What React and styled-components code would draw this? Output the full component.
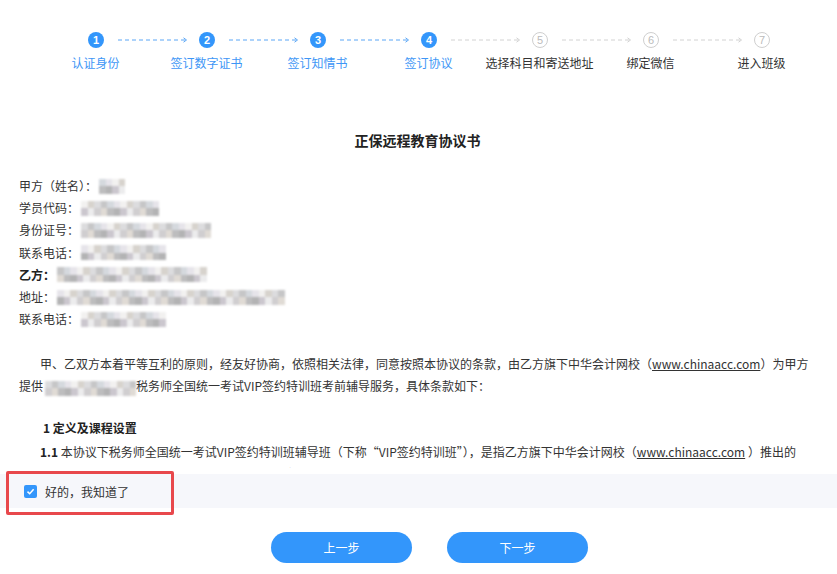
import React from "react";
import styled, { createGlobalStyle } from "styled-components";

const GlobalStyle = createGlobalStyle`
  html, body { margin: 0; padding: 0; background: #fff; }
  body {
    font-family: "Microsoft YaHei", "Noto Sans CJK SC", "Liberation Sans", sans-serif;
    color: #333;
  }
`;

const BLUE = "#3396fb";

const steps = [
  { label: "认证身份", done: true },
  { label: "签订数字证书", done: true },
  { label: "签订知情书", done: true },
  { label: "签订协议", done: true },
  { label: "选择科目和寄送地址", done: false },
  { label: "绑定微信", done: false },
  { label: "进入班级", done: false },
];

const greys = ["#ececed", "#dcdcde", "#d0ced0", "#c6c6c7", "#e0dbd5", "#d5d9de", "#bdbdbe", "#e6e4ea", "#b3b3b4", "#f2f1f0", "#cbc7ce", "#d7d3cd"];

function cells(seed, count) {
  const out = [];
  let s = seed * 9301 + 49297;
  for (let i = 0; i < count; i++) {
    s = (s * 9301 + 49297) % 233280;
    out.push(greys[s % greys.length]);
  }
  return out;
}

function Mosaic({ width, seed = 1 }) {
  const cols = Math.max(2, Math.round(width / 6.5));
  const list = cells(seed, cols * 2);
  return (
    <MosaicBox $cols={cols}>
      {list.map((c, i) => (
        <Cell key={i} $c={c} />
      ))}
    </MosaicBox>
  );
}

function Connector({ done }) {
  const c = done ? "#5aa6f6" : "#d2d2d2";
  return (
    <Line width="70" height="8" viewBox="0 0 70 8">
      <line x1="0" y1="4" x2="68" y2="4" stroke={c} strokeWidth="1" strokeDasharray="4 3" />
      <polyline points="65.5,1.8 68.5,4 65.5,6.2" fill="none" stroke={c} strokeWidth="1" />
    </Line>
  );
}

export default function App() {
  return (
    <Page>
      <GlobalStyle />
      <Steps>
        <CircleRow>
          {steps.map((s, i) => (
            <React.Fragment key={s.label}>
              <Circle $done={s.done}>{i + 1}</Circle>
              {i < steps.length - 1 && <Connector done={steps[i + 1].done} />}
            </React.Fragment>
          ))}
        </CircleRow>
        <LabelRow>
          {steps.map((s) => (
            <StepLabel key={s.label} $done={s.done}>
              {s.label}
            </StepLabel>
          ))}
        </LabelRow>
      </Steps>

      <ScrollBox>
        <Content>
          <Title>正保远程教育协议书</Title>
          <Fields>
            <Field>甲方（姓名）：<Mosaic width={28} seed={3} /></Field>
            <Field>学员代码：<Mosaic width={78} seed={7} /></Field>
            <Field>身份证号：<Mosaic width={130} seed={11} /></Field>
            <Field>联系电话：<Mosaic width={83} seed={5} /></Field>
            <Field><strong>乙方：</strong><Mosaic width={150} seed={13} /></Field>
            <Field>地址：<Mosaic width={229} seed={17} /></Field>
            <Field>联系电话：<Mosaic width={85} seed={19} /></Field>
          </Fields>
          <Para>
            甲、乙双方本着平等互利的原则，经友好协商，依照相关法律，同意按照本协议的条款，由乙方旗下中华会计网校（<Link>www.chinaacc.com</Link>）为甲方提供<Mosaic width={92} seed={23} />税务师全国统一考试VIP签约特训班考前辅导服务，具体条款如下：
          </Para>
          <Heading>1 定义及课程设置</Heading>
          <Clause>
            <strong>1.1</strong> 本协议下税务师全国统一考试VIP签约特训班辅导班（下称“VIP签约特训班”），是指乙方旗下中华会计网校（<Link>www.chinaacc.com</Link> ）推出的针对税务师全国统一考试的考前辅导课程，包括网络课程、直播课程、习题及答疑等服务内容。
          </Clause>
          <Clause>
            <strong>1.2</strong> 甲方报名VIP签约特训班后，应按照乙方的教学安排参加学习，按时完成课程学习及相关测试。
          </Clause>
        </Content>
      </ScrollBox>

      <AgreeBar>
        <Highlight />
        <Check>
          <svg width="9" height="9" viewBox="0 0 9 9">
            <polyline points="1.5,4.6 3.7,6.7 7.6,2.3" fill="none" stroke="#fff" strokeWidth="1.5" />
          </svg>
        </Check>
        <AgreeText>好的，我知道了</AgreeText>
      </AgreeBar>

      <Buttons>
        <Button>上一步</Button>
        <Button>下一步</Button>
      </Buttons>
    </Page>
  );
}

const Page = styled.div`
  width: 837px;
  height: 574px;
  overflow: hidden;
  display: flex;
  flex-direction: column;
`;

const Steps = styled.div`
  padding-top: 32px;
`;

const CircleRow = styled.div`
  display: flex;
  align-items: center;
  padding-left: 88px;
  height: 16px;
`;

const Circle = styled.span`
  flex: none;
  width: 16px;
  height: 16px;
  box-sizing: border-box;
  border-radius: 50%;
  display: flex;
  align-items: center;
  justify-content: center;
  font-family: "Liberation Sans", Arial, sans-serif;
  font-size: 11px;
  font-weight: ${({ $done }) => ($done ? 700 : 400)};
  background: ${({ $done }) => ($done ? BLUE : "#fff")};
  color: ${({ $done }) => ($done ? "#fff" : "#bbb")};
  border: ${({ $done }) => ($done ? "none" : "1px solid #cfcfcf")};
`;

const Line = styled.svg`
  flex: none;
  margin: 0 11px 0 14px;
  display: block;
`;

const LabelRow = styled.div`
  display: grid;
  grid-template-columns: repeat(7, 111px);
  margin: 6px 0 0 40px;
`;

const StepLabel = styled.span`
  text-align: center;
  font-size: 12px;
  line-height: 18px;
  white-space: nowrap;
  color: ${({ $done }) => ($done ? "#3d96f6" : "#333")};
`;

const ScrollBox = styled.div`
  margin-top: 32px;
  height: 364px;
  overflow-y: scroll;
  &::-webkit-scrollbar {
    width: 2px;
  }
  &::-webkit-scrollbar-thumb {
    background: #7d7d7d;
  }
  &::-webkit-scrollbar-track {
    background: transparent;
  }
`;

const Content = styled.div`
  padding: 26px 21px 0 19px;
  min-height: 3900px;
  font-size: 12px;
  line-height: 22px;
  color: #333;
`;

const Title = styled.h1`
  margin: 0 0 25px;
  text-align: center;
  font-size: 14px;
  line-height: 20px;
  font-weight: 700;
  color: #222;
`;

const Fields = styled.div`
  display: flex;
  flex-direction: column;
`;

const Field = styled.div`
  line-height: 22.2px;
  height: 22.2px;
  display: flex;
  align-items: center;
  strong {
    font-weight: 700;
    color: #222;
  }
`;

const MosaicBox = styled.span`
  display: inline-grid;
  grid-template-rows: repeat(2, 7.5px);
  grid-template-columns: repeat(${({ $cols }) => $cols}, 6.5px);
  grid-auto-flow: column;
  vertical-align: middle;
  filter: blur(0.8px);
  margin-left: 2px;
`;

const Cell = styled.i`
  display: block;
  background: ${({ $c }) => $c};
`;

const Para = styled.p`
  margin: 23px 0 0;
  text-indent: 21px;
`;

const Link = styled.a`
  color: #333;
  text-decoration: underline;
`;

const Heading = styled.h3`
  margin: 20px 0 0 24px;
  font-size: 12px;
  line-height: 22px;
  font-weight: 700;
  color: #222;
`;

const Clause = styled.p`
  margin: 2px 0 0;
  padding-right: 14px;
  text-indent: 21px;
  strong {
    font-weight: 700;
    color: #222;
  }
`;

const AgreeBar = styled.div`
  position: relative;
  margin-top: 6px;
  height: 34px;
  background: #f6f7fb;
  display: flex;
  align-items: center;
  padding-left: 24px;
  gap: 8px;
`;

const Highlight = styled.span`
  position: absolute;
  left: 6px;
  top: -3px;
  width: 168px;
  height: 44px;
  box-sizing: border-box;
  border: 3px solid #e8484c;
  border-radius: 2px;
  pointer-events: none;
`;

const Check = styled.span`
  width: 13px;
  height: 13px;
  border-radius: 2px;
  background: ${BLUE};
  display: flex;
  align-items: center;
  justify-content: center;
`;

const AgreeText = styled.span`
  font-size: 12px;
  color: #333;
`;

const Buttons = styled.div`
  margin-top: 24px;
  display: flex;
  justify-content: center;
  gap: 35px;
  padding-left: 22px;
`;

const Button = styled.button`
  width: 141px;
  height: 31px;
  border: none;
  border-radius: 16px;
  background: ${BLUE};
  color: #fff;
  font-family: inherit;
  font-size: 12px;
  cursor: pointer;
`;
